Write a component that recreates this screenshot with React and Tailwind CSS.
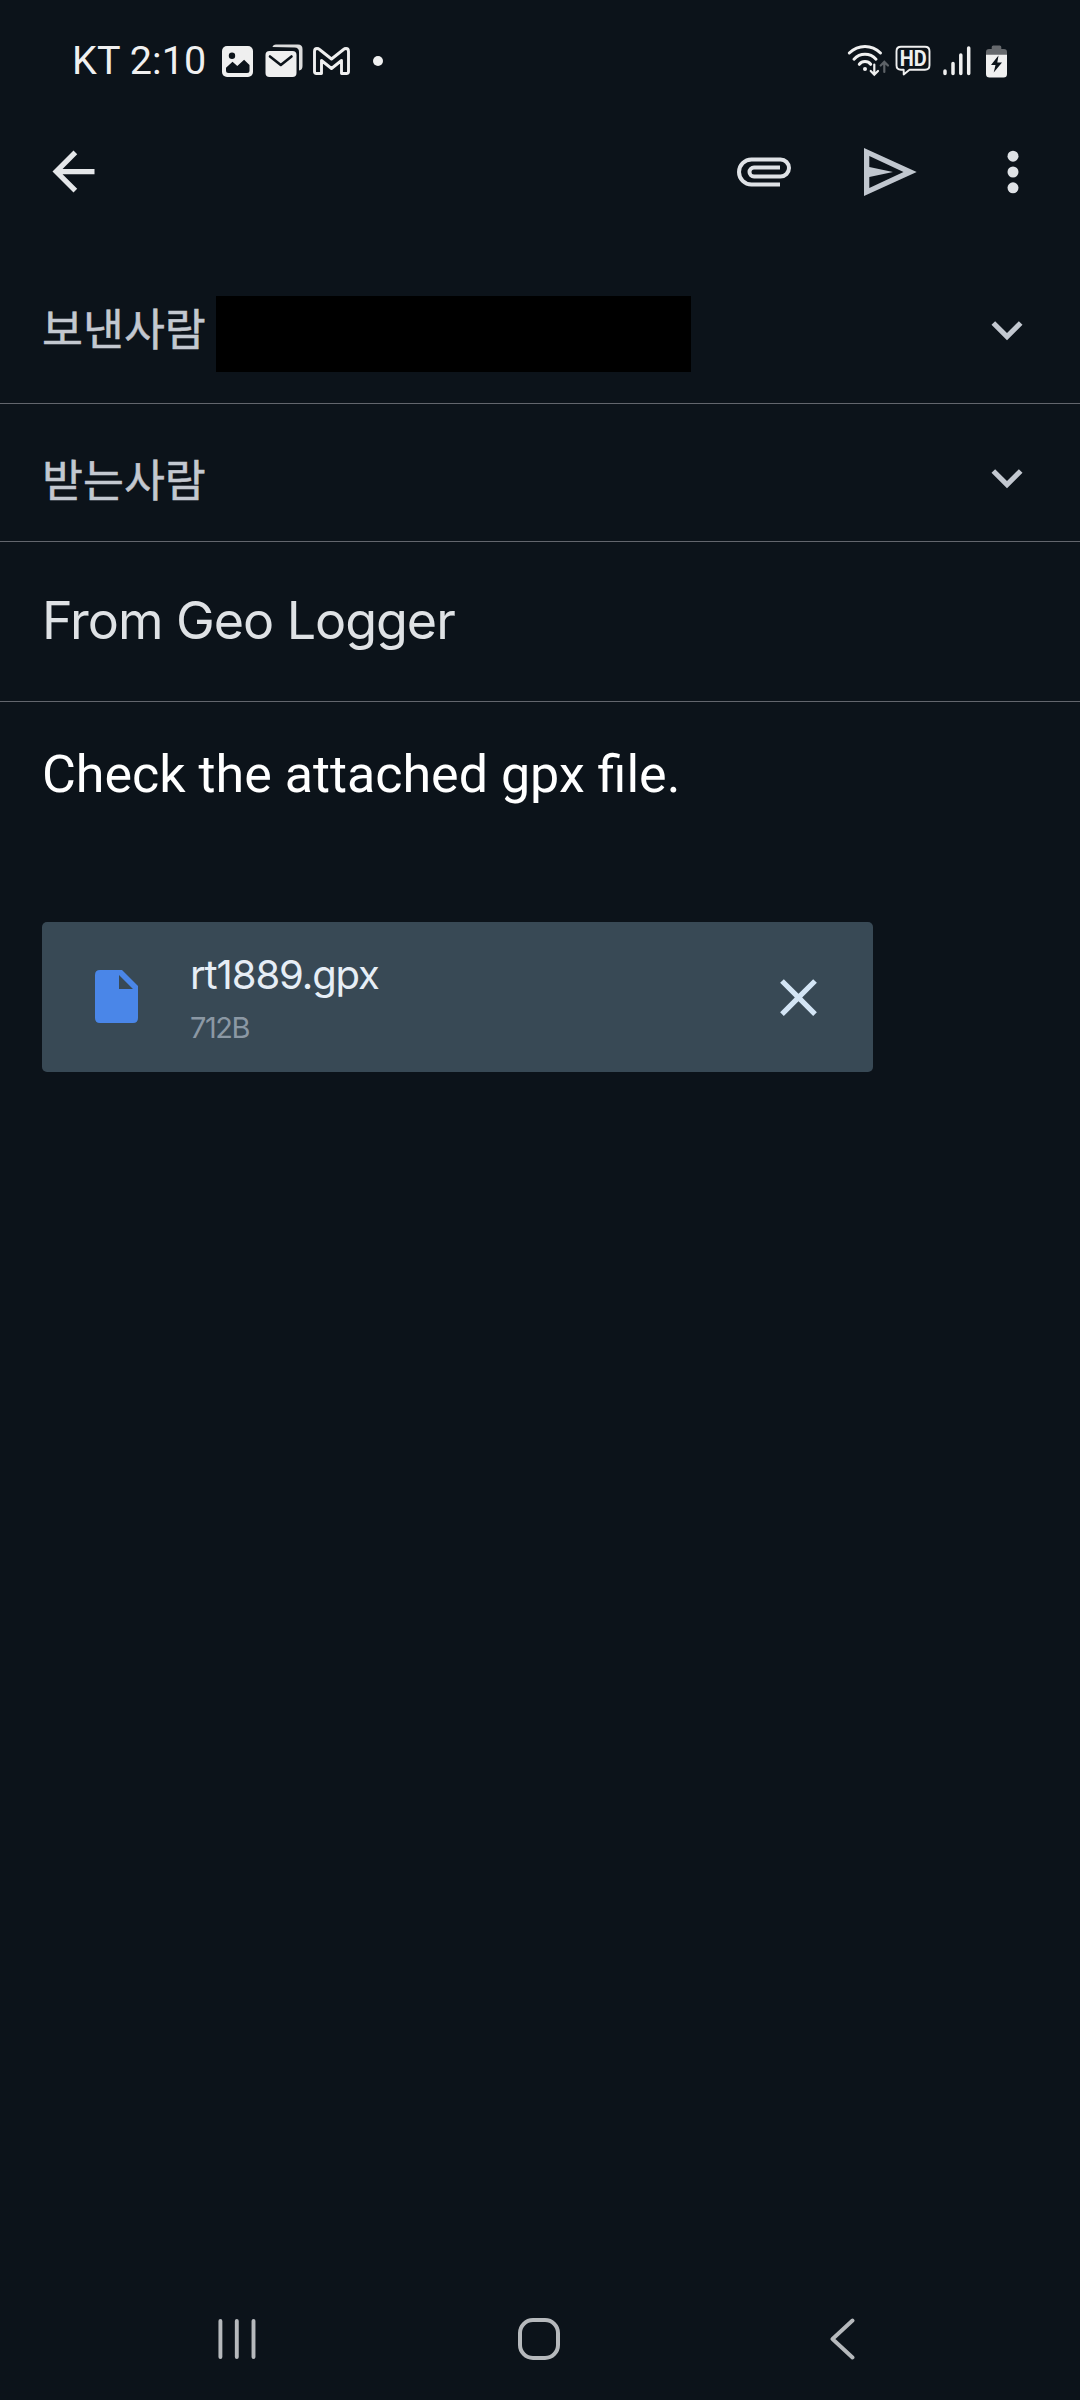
import React from 'react';

const PictureIcon = () => (
  <svg width="31" height="31" viewBox="0 0 31 31">
    <rect width="31" height="31" rx="5" fill="#efefef" />
    <circle cx="10" cy="9.7" r="3.2" fill="#0c131a" />
    <path d="M4 24.5v-2.7l6.5-6 4.8 4.2 6.8-6.3 5.4 5.4v5.4q0 2.5-2.5 2.5H6.500q-2.500 0-2.500-2.500z" fill="#0c131a" />
  </svg>
);

const MailStackIcon = () => (
  <svg width="38" height="34" viewBox="0 0 38 34">
    <path d="M7.500 3Q8 .5 11 .5h22q4.500 0 4.500 4.500v17q0 4-3.500 4.500V8q0-4.500-4.500-4.500z" fill="#dcdcdc" />
    <rect x=".5" y="7" width="31" height="26" rx="4" fill="#efefef" />
    <path d="M5 12.500l10.800 8.500L26.500 12.500" fill="none" stroke="#0c131a" strokeWidth="2.600" strokeLinecap="round" strokeLinejoin="round" />
  </svg>
);

const GmailIcon = () => (
  <svg width="37" height="28" viewBox="0 0 37 28">
    <path
      d="M3.500 26.500q-2 0-2-2V4.500q0-3 2.500-3 1.500 0 2.500 1L18.500 12 30.500 2.500q1-1 2.500-1 2.500 0 2.500 3v20q0 2-2 2h-5V13.500l-10 8-10-8v13z"
      fill="none"
      stroke="#efefef"
      strokeWidth="2.900"
      strokeLinejoin="round"
    />
  </svg>
);

const WifiIcon = () => (
  <svg width="43" height="34" viewBox="0 0 43 34" fill="none" strokeLinecap="round">
    <g stroke="#f0f0f0" strokeWidth="3">
      <path d="M2.300 9Q9 2.400 18 2.400T33.500 9" />
      <path d="M7 15.200Q11.500 10.300 18 10.300T29 15.200" />
      <path d="M12.300 20.300Q14.500 17.600 18 17.600T23.700 20.300" />
    </g>
    <circle cx="18" cy="25" r="2" fill="#f0f0f0" />
    <path d="M27.300 20.500v9.500M23.700 27l3.600 3.600L31 27" stroke="#f0f0f0" strokeWidth="2.200" />
    <path d="M37.300 28v-9.500M33.700 21.500l3.600-3.600L41 21.500" stroke="#5d6267" strokeWidth="2.200" />
  </svg>
);

const HdIcon = () => (
  <svg width="36" height="32" viewBox="0 0 36 32">
    <path
      d="M6 1.700h24q4.500 0 4.500 4.500v14q0 4.500-4.500 4.500H14.500L8.700 29.500v-4.800H6q-4.500 0-4.500-4.500v-14q0-4.500 4.500-4.500z"
      fill="none"
      stroke="#f0f0f0"
      strokeWidth="1.900"
      strokeLinejoin="round"
    />
    <text x="18.200" y="20.800" textAnchor="middle" textLength="27" lengthAdjust="spacingAndGlyphs" fill="#f0f0f0" className="font-['Roboto',sans-serif] text-[22px] font-bold">HD</text>
  </svg>
);

const SignalIcon = () => (
  <svg width="28" height="30" viewBox="0 0 28 30" stroke="#f0f0f0" strokeWidth="3.500" strokeLinecap="round">
    <path d="M2 25v2.500M10 17.500v10M17.800 9v18.500M25.700 2v25.500" />
  </svg>
);

const BatteryIcon = () => (
  <svg width="21" height="33" viewBox="0 0 21 33">
    <path d="M5.700 4V2Q5.700.5 7.200.5h6.600q1.500 0 1.500 1.500v2H18q3 0 3 3v4H0V7q0-3 3-3z" fill="#66696d" />
    <path d="M0 9.700h21V29q0 3.500-3.500 3.500h-14Q0 32.500 0 29z" fill="#f0f0f0" />
    <path d="M12.500 10.500L5 20h4.500L7.700 27.500 16 17.500h-4.700z" fill="#0c131a" />
  </svg>
);

const StatusBar = () => (
  <div className="flex h-[122px] items-center pl-[72px] pr-[73px]">
    <span className="w-[150px] whitespace-nowrap font-['Roboto',sans-serif] text-[39.5px] leading-none tracking-[0.1px] text-[#f0f0f0]">
      KT 2:10
    </span>
    <PictureIcon />
    <div className="ml-[12px]"><MailStackIcon /></div>
    <div className="ml-[10px]"><GmailIcon /></div>
    <div className="ml-[23px] size-[10px] rounded-full bg-[#f0f0f0]" />
    <div className="ml-auto flex items-center">
      <WifiIcon />
      <div className="ml-[5px]"><HdIcon /></div>
      <div className="ml-[12px]"><SignalIcon /></div>
      <div className="ml-[15px]"><BatteryIcon /></div>
    </div>
  </div>
);

const Toolbar = () => (
  <div className="flex h-[99px] items-center pl-[42px] pr-[61px]">
    <svg width="63" height="63" viewBox="0 0 24 24" fill="#e5e7e9">
      <path d="M20 11H7.830l5.590-5.590L12 4l-8 8 8 8 1.410-1.410L7.830 13H20z" />
    </svg>
    <svg className="ml-auto" width="54" height="30" viewBox="0 0 54 30" fill="none" stroke="#dfe2e6" strokeWidth="4">
      <path d="M43 27.500H14.500a12.500 12.500 0 0 1 0-25H43.500a8.500 8.500 0 0 1 0 17H17a4.500 4.500 0 0 1 0-9h26" />
    </svg>
    <svg className="ml-[73px]" width="53" height="48" viewBox="0 0 53 48" fill="#c1c7cf" fillRule="evenodd">
      <path d="M0 0L52.700 24 0 48zM5.300 8v11L29 24 5.300 29V40L39.500 24z" />
    </svg>
    <svg className="ml-[90px]" width="12" height="44" viewBox="0 0 12 44" fill="#dfe2e6">
      <circle cx="6" cy="6.200" r="5.500" />
      <circle cx="6" cy="22" r="5.500" />
      <circle cx="6" cy="37.800" r="5.500" />
    </svg>
  </div>
);

const ExpandIcon = () => (
  <svg width="62" height="62" viewBox="0 0 24 24" fill="#c3c8d0">
    <path d="M16.590 8.590L12 13.170 7.410 8.590 6 10l6 6 6-6z" />
  </svg>
);

const labelClass = "font-['Noto_Sans_CJK_KR',sans-serif] text-[44.5px] leading-none text-[#c3c8d0] [-webkit-text-stroke:0.5px_#c3c8d0]";

const Attachment = ({ name, size }) => (
  <div className="mx-[42px] mt-[111px] flex h-[150px] w-[831px] items-center rounded-[5px] bg-[#384955] pl-[53px] pr-[43px]">
    <svg className="-mt-[2px]" width="43" height="53" viewBox="0 0 43 53" fill="#4a86e8" fillRule="evenodd">
      <path d="M5 0H27L43 16V48q0 5-5 5H5q-5 0-5-5V5Q0 0 5 0zM24 5v14h14z" />
    </svg>
    <div className="ml-[52px] flex flex-col pt-[1px] font-['Inter',sans-serif]">
      <span className="text-[40px] leading-[52px] tracking-[-1.1px] text-[#e6eef6]">{name}</span>
      <span className="mt-[8px] text-[29px] leading-[38px] tracking-[-1.5px] text-[#8b98a4]">{size}</span>
    </div>
    <svg className="ml-auto" width="63" height="63" viewBox="0 0 24 24" fill="#d3e5f5">
      <path d="M19 6.410L17.590 5 12 10.590 6.410 5 5 6.410 10.590 12 5 17.590 6.410 19 12 13.410 17.590 19 19 17.590 13.410 12z" />
    </svg>
  </div>
);

const NavigationBar = () => (
  <div className="mt-auto flex h-[122px] items-center pl-[218px] pr-[225px]">
    <svg width="38" height="42" viewBox="0 0 38 42" stroke="#b6b9bc" strokeWidth="3.900" strokeLinecap="round">
      <path d="M2.400 3v36M18.800 3v36M35.500 3v36" />
    </svg>
    <div className="ml-[262px] size-[42px] rounded-[15px] border-4 border-[#b6b9bc]" />
    <svg className="ml-auto" width="25" height="42" viewBox="0 0 25 42" fill="none" stroke="#b6b9bc" strokeWidth="3.900" strokeLinecap="round" strokeLinejoin="round">
      <path d="M22.500 2.500L2.500 21l20 18.500" />
    </svg>
  </div>
);

export default function App() {
  return (
    <div className="flex h-[2400px] w-[1080px] flex-col overflow-hidden bg-[#0c131a]">
      <StatusBar />
      <Toolbar />

      {/* Sender, with the address blacked out */}
      <div className="flex h-[183px] items-center border-b border-[#63666d] px-[42px] pt-[35px]">
        <span className={`mb-[5px] w-[174px] ${labelClass}`}>보낸사람</span>
        <div className="mt-[8px] h-[76px] w-[475px] bg-black" />
        <div className="ml-auto"><ExpandIcon /></div>
      </div>

      {/* Recipient */}
      <div className="flex h-[138px] items-center justify-between border-b border-[#63666d] px-[42px] pt-[10px]">
        <span className={`mt-[2px] ${labelClass}`}>받는사람</span>
        <ExpandIcon />
      </div>

      <div className="flex h-[160px] items-center border-b border-[#63666d] px-[42px] pb-[1px]">
        <span className="font-['Inter',sans-serif] text-[52px] leading-none tracking-[-1.05px] text-[#dfe2e5]">From Geo Logger</span>
      </div>

      <p className="mt-[37px] px-[42px] font-['Roboto',sans-serif] text-[52px] leading-[72px] text-white">
        Check the attached gpx file.
      </p>

      <Attachment name="rt1889.gpx" size="712B" />
      <NavigationBar />
    </div>
  );
}
